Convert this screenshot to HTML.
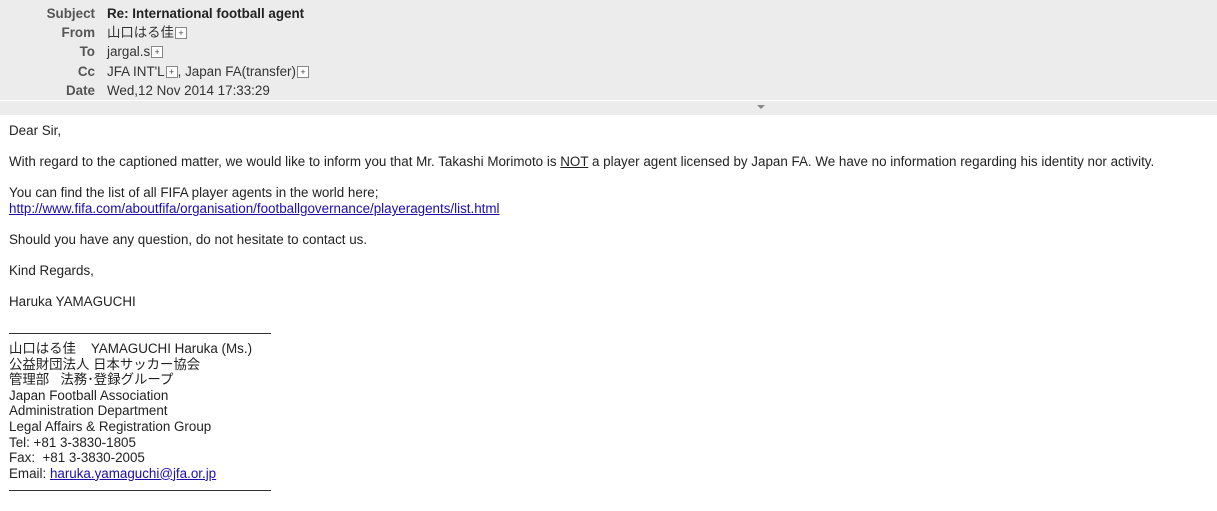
<!DOCTYPE html>
<html><head><meta charset="utf-8"><style>
body{margin:0;width:1217px;height:511px;background:#fff;font-family:"Liberation Sans","Noto Sans CJK JP",sans-serif;font-size:13.4px;color:#222;overflow:hidden;position:relative}
.hdr{position:absolute;left:0;top:0;width:1217px;height:100px;background:#ececec}
.strip{position:absolute;left:0;top:101px;width:1217px;height:14px;background:#ececec}
.row{position:absolute;left:0;height:19px;line-height:19px;white-space:nowrap}
.lab{position:absolute;left:0;width:95px;text-align:right;font-weight:bold;color:#555}
.val{position:absolute;left:107px;color:#333}
.pl{display:inline-block;width:10px;height:10px;border:1px solid #888;font-size:9px;line-height:10px;text-align:center;vertical-align:1px;background:#fff;color:#444;margin-left:1px}
.t{position:absolute;left:9px;white-space:nowrap;line-height:16px}
a{color:#1a0dab;text-decoration:underline}
.hr{position:absolute;left:9px;width:262px;height:1px;background:#333}
</style></head><body>
<div class="hdr"></div>
<div class="strip"><div style="position:absolute;left:757px;top:4px;width:0;height:0;border-left:4px solid transparent;border-right:4px solid transparent;border-top:4px solid #888"></div></div>
<div class="row" style="top:4px;width:400px"><span class="lab">Subject</span><span class="val" style="font-weight:bold;color:#222">Re: International football agent</span></div>
<div class="row" style="top:23px;width:400px"><span class="lab">From</span><span class="val">山口はる佳<span class="pl">+</span></span></div>
<div class="row" style="top:42px;width:400px"><span class="lab">To</span><span class="val">jargal.s<span class="pl">+</span></span></div>
<div class="row" style="top:62px;width:400px"><span class="lab">Cc</span><span class="val">JFA INT'L<span class="pl">+</span>, Japan FA(transfer)<span class="pl">+</span></span></div>
<div class="row" style="top:81px;width:400px"><span class="lab">Date</span><span class="val">Wed,12 Nov 2014 17:33:29</span></div>

<div class="t" style="top:123px">Dear Sir,</div>
<div class="t" style="top:154px">With regard to the captioned matter, we would like to inform you that Mr. Takashi Morimoto is <u>NOT</u> a player agent licensed by Japan FA. We have no information regarding his identity nor activity.</div>
<div class="t" style="top:185px">You can find the list of all FIFA player agents in the world here;<br><a>http://www.fifa.com/aboutfifa/organisation/footballgovernance/playeragents/list.html</a></div>
<div class="t" style="top:232px">Should you have any question, do not hesitate to contact us.</div>
<div class="t" style="top:263px">Kind Regards,</div>
<div class="t" style="top:294px">Haruka YAMAGUCHI</div>
<div class="hr" style="top:333px"></div>
<div class="t" style="top:341px;line-height:15.6px">山口はる佳&nbsp;&nbsp;&nbsp; YAMAGUCHI Haruka (Ms.)<br>公益財団法人 日本サッカー協会<br>管理部&nbsp;&nbsp; 法務･登録グループ<br>Japan Football Association<br>Administration Department<br>Legal Affairs &amp; Registration Group<br>Tel: +81 3-3830-1805<br>Fax:&nbsp; +81 3-3830-2005<br>Email: <a>haruka.yamaguchi@jfa.or.jp</a></div>
<div class="hr" style="top:490px"></div>
</body></html>
